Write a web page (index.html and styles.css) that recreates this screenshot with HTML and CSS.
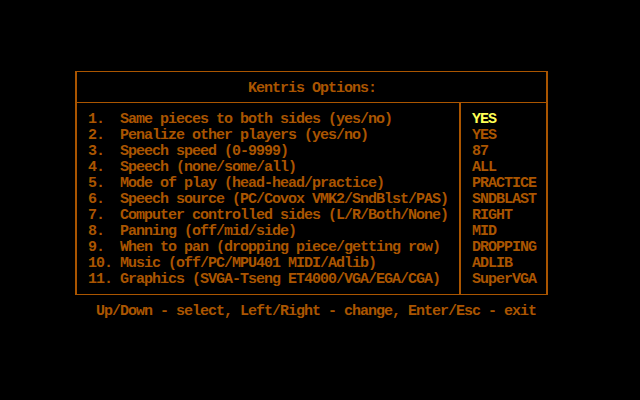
FILE: index.html
```html
<!DOCTYPE html>
<html>
<head>
<meta charset="utf-8">
<link rel="stylesheet" href="styles.css">
</head>
<body>
<div class="screen">
  <div class="box">
    <div class="title">Kentris Options:</div>
    <div class="body">
      <div class="items">
        <div class="row"><span class="num">1.</span><span>Same pieces to both sides (yes/no)</span></div>
        <div class="row"><span class="num">2.</span><span>Penalize other players (yes/no)</span></div>
        <div class="row"><span class="num">3.</span><span>Speech speed (0-9999)</span></div>
        <div class="row"><span class="num">4.</span><span>Speech (none/some/all)</span></div>
        <div class="row"><span class="num">5.</span><span>Mode of play (head-head/practice)</span></div>
        <div class="row"><span class="num">6.</span><span>Speech source (PC/Covox VMK2/SndBlst/PAS)</span></div>
        <div class="row"><span class="num">7.</span><span>Computer controlled sides (L/R/Both/None)</span></div>
        <div class="row"><span class="num">8.</span><span>Panning (off/mid/side)</span></div>
        <div class="row"><span class="num">9.</span><span>When to pan (dropping piece/getting row)</span></div>
        <div class="row"><span class="num">10.</span><span>Music (off/PC/MPU401 MIDI/Adlib)</span></div>
        <div class="row"><span class="num">11.</span><span>Graphics (SVGA-Tseng ET4000/VGA/EGA/CGA)</span></div>
      </div>
      <div class="values">
        <div class="row selected">YES</div>
        <div class="row">YES</div>
        <div class="row">87</div>
        <div class="row">ALL</div>
        <div class="row">PRACTICE</div>
        <div class="row">SNDBLAST</div>
        <div class="row">RIGHT</div>
        <div class="row">MID</div>
        <div class="row">DROPPING</div>
        <div class="row">ADLIB</div>
        <div class="row">SuperVGA</div>
      </div>
    </div>
  </div>
  <div class="footer">Up/Down - select, Left/Right - change, Enter/Esc - exit</div>
</div>
</body>
</html>
```
FILE: styles.css
```css
html, body {
  margin: 0;
  padding: 0;
  background: #000;
}
.screen {
  width: 640px;
  height: 400px;
  box-sizing: border-box;
  padding-top: 71px;
  padding-left: 75px;
  background: #000;
  color: #aa5500;
  font-family: "Liberation Mono", monospace;
  font-weight: bold;
  font-size: 15px;
  letter-spacing: -1px;
  line-height: 18px;
  white-space: nowrap;
}
.box {
  width: 469px;
  border-left: 2px solid #aa5500;
  border-right: 2px solid #aa5500;
  border-top: 1px solid #aa5500;
  border-bottom: 1px solid #aa5500;
}
.title {
  height: 31px;
  box-sizing: border-box;
  padding-top: 8px;
  padding-left: 171px;
  border-bottom: 1px solid #aa5500;
}
.body {
  display: flex;
  height: 191px;
}
.items {
  width: 382px;
  box-sizing: border-box;
  padding-top: 8px;
  padding-left: 11px;
}
.values {
  flex: 1;
  border-left: 2px solid #aa5500;
  padding-top: 8px;
  padding-left: 11px;
}
.row {
  height: 16px;
  display: flex;
}
.num {
  width: 32px;
  flex: none;
}
.selected {
  color: #ffff55;
}
.footer {
  height: 16px;
  margin-top: 8px;
  padding-left: 21px;
}
```
